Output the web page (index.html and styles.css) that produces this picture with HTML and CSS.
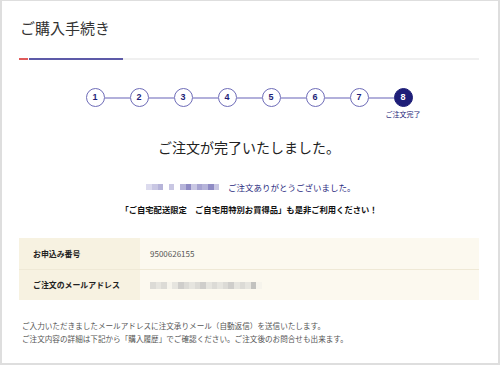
FILE: index.html
```html
<!DOCTYPE html>
<html lang="ja">
<head>
<meta charset="utf-8">
<link rel="stylesheet" href="styles.css">
</head>
<body>
<div class="frame">
  <h1 class="title">ご購入手続き</h1>
  <div class="title-rule">
    <span class="rule-red"></span><span class="rule-blue"></span><span class="rule-gray"></span>
  </div>

  <div class="steps">
    <div class="step">1</div><div class="link"></div>
    <div class="step">2</div><div class="link"></div>
    <div class="step">3</div><div class="link"></div>
    <div class="step">4</div><div class="link"></div>
    <div class="step">5</div><div class="link"></div>
    <div class="step">6</div><div class="link"></div>
    <div class="step">7</div><div class="link"></div>
    <div class="step current">8<span class="step-label">ご注文完了</span></div>
  </div>

  <h2 class="done">ご注文が完了いたしました。</h2>

  <p class="thanks">
    <span class="blur blur-name">
      <i class="p1"></i><i class="p2"></i><i class="p3"></i><i class="p0"></i><i class="p2"></i><i class="p0"></i><i class="p3"></i><i class="p4"></i><i class="p2"></i><i class="p5"></i><i class="p3"></i><i class="p4"></i><i class="p2"></i>
    </span>
    <span class="thanks-text">ご注文ありがとうございました。</span>
  </p>
  <p class="promo">「ご自宅配送限定　ご自宅用特別お買得品」も是非ご利用ください！</p>

  <div class="info">
    <div class="row">
      <div class="label">お申込み番号</div>
      <div class="value">9500626155</div>
    </div>
    <div class="row">
      <div class="label">ご注文のメールアドレス</div>
      <div class="value">
        <span class="blur blur-mail">
          <i class="g1"></i><i class="g2"></i><i class="g1"></i><i class="g0"></i><i class="g2"></i><i class="g3"></i><i class="g1"></i><i class="g2"></i><i class="g1"></i><i class="g3"></i><i class="g2"></i><i class="g1"></i><i class="g2"></i><i class="g1"></i><i class="g3"></i><i class="g2"></i><i class="g1"></i><i class="g2"></i><i class="g4"></i><i class="g0"></i>
        </span>
      </div>
    </div>
  </div>

  <div class="notes">
    <p>ご入力いただきましたメールアドレスに注文承りメール（自動返信）を送信いたします。</p>
    <p>ご注文内容の詳細は下記から「購入履歴」でご確認ください。ご注文後のお問合せも出来ます。</p>
  </div>
</div>
</body>
</html>
```

FILE: styles.css
```css
* { box-sizing: border-box; }
html, body { margin: 0; padding: 0; background: #fff; }
body {
  font-family: "Noto Sans CJK JP", "Noto Sans", sans-serif;
  color: #333;
}
.frame {
  width: 500px;
  height: 365px;
  border: 2px solid #dedede;
  border-top-width: 1px;
  padding: 0 19px 0 17px;
  overflow: hidden;
}
.title {
  margin: 17px 0 0 1px;
  font-size: 15px;
  line-height: 20px;
  font-weight: 400;
  color: #333;
}
.title-rule {
  display: flex;
  margin-top: 20px;
  height: 2px;
}
.rule-red { width: 9px; background: #e05a5a; }
.rule-blue { width: 94px; margin-left: 1px; background: #5d5aa8; }
.rule-gray { flex: 1; background: #f0f0f0; }

.steps {
  display: flex;
  align-items: center;
  justify-content: center;
  margin-top: 28px;
}
.step {
  position: relative;
  width: 19px;
  height: 19px;
  border: 1px solid #6e6cb8;
  border-radius: 50%;
  background: #fff;
  color: #1e1e78;
  font-family: "Liberation Sans", Arial, sans-serif;
  font-weight: 700;
  font-size: 9px;
  line-height: 17px;
  text-align: center;
}
.step.current {
  background: #1e1e78;
  border-color: #1e1e78;
  color: #fff;
}
.link {
  width: 25px;
  height: 2px;
  background: #b2b0db;
}
.step-label {
  position: absolute;
  top: 21px;
  left: 50%;
  transform: translateX(-50%);
  white-space: nowrap;
  font-family: "Noto Sans CJK JP", sans-serif;
  font-weight: 400;
  font-size: 7px;
  line-height: 9px;
  color: #1e1e78;
}

.done {
  margin: 30px 0 0;
  text-align: center;
  font-size: 14px;
  line-height: 20px;
  font-weight: 400;
  color: #222;
}
.thanks {
  margin: 24px 0 0;
  display: flex;
  justify-content: center;
  align-items: center;
  height: 12px;
  padding-left: 4px;
}
.thanks-text {
  font-size: 8.5px;
  line-height: 12px;
  color: #2a2a80;
  margin-left: 9px;
}
.blur { display: inline-flex; }
.blur i { display: block; width: 5.6px; height: 6px; }
.blur-name i.p0 { background: #fff; }
.blur-name i.p1 { background: #dcdbee; }
.blur-name i.p2 { background: #c9c7e3; }
.blur-name i.p3 { background: #b6b4d9; }
.blur-name i.p4 { background: #8f8bc4; }
.blur-name i.p5 { background: #a7a4d1; }

.promo {
  margin: 10px 0 0;
  text-align: center;
  font-size: 8.3px;
  line-height: 12px;
  font-weight: 700;
  color: #111;
}

.info {
  margin: 23px 0 0;
  background: #fcf9ef;
}
.row {
  display: flex;
  height: 31px;
}
.row + .row { border-top: 1px solid #efe9d6; height: 31px; }
.label {
  width: 121px;
  background: #f7f2e1;
  padding-left: 14px;
  font-size: 7.9px;
  font-weight: 700;
  line-height: 31px;
  color: #222;
}
.row + .row .label { line-height: 30px; }
.value {
  flex: 1;
  padding-left: 10px;
  font-size: 8px;
  line-height: 31px;
  color: #555;
  display: flex;
  align-items: center;
}
.blur-mail i { width: 5.6px; height: 7px; }
.blur-mail i.g0 { background: #f6f4ec; }
.blur-mail i.g1 { background: #dcdbd6; }
.blur-mail i.g2 { background: #e6e5df; }
.blur-mail i.g3 { background: #cfcecb; }
.blur-mail i.g4 { background: #c2c2bf; }

.notes {
  margin: 19px 0 0 3px;
  font-size: 7.6px;
  line-height: 13px;
  color: #555;
}
.notes p { margin: 0; }
```
